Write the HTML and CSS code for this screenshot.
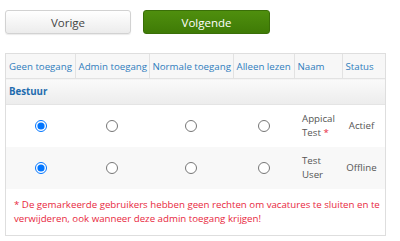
FILE: index.html
```html
<!DOCTYPE html>
<html>
<head>
<meta charset="utf-8">
<link rel="stylesheet" href="styles.css">
</head>
<body>
<div class="page">
  <div class="buttons">
    <button class="btn btn-prev">Vorige</button>
    <button class="btn btn-next">Volgende</button>
  </div>
  <div class="panel">
    <table class="grid">
      <colgroup>
        <col class="c1"><col class="c2"><col class="c3"><col class="c4"><col class="c5"><col class="c6">
      </colgroup>
      <thead>
        <tr>
          <th>Geen toegang</th>
          <th>Admin toegang</th>
          <th>Normale toegang</th>
          <th>Alleen lezen</th>
          <th>Naam</th>
          <th>Status</th>
        </tr>
      </thead>
      <tbody>
        <tr class="group"><td colspan="6">Bestuur</td></tr>
        <tr class="row">
          <td class="radio"><input type="radio" name="u1" checked></td>
          <td class="radio"><input type="radio" name="u1"></td>
          <td class="radio"><input type="radio" name="u1"></td>
          <td class="radio"><input type="radio" name="u1"></td>
          <td class="name">Appical Test <span class="req">*</span></td>
          <td class="status">Actief</td>
        </tr>
        <tr class="row alt">
          <td class="radio"><input type="radio" name="u2" checked></td>
          <td class="radio"><input type="radio" name="u2"></td>
          <td class="radio"><input type="radio" name="u2"></td>
          <td class="radio"><input type="radio" name="u2"></td>
          <td class="name">Test User</td>
          <td class="status">Offline</td>
        </tr>
      </tbody>
    </table>
    <p class="note">* De gemarkeerde gebruikers hebben geen rechten om vacatures te sluiten en te verwijderen, ook wanneer deze admin toegang krijgen!</p>
  </div>
</div>
</body>
</html>
```
FILE: styles.css
```css
html, body {
  margin: 0;
  padding: 0;
  background: #fff;
}
body {
  font-family: "Open Sans", "Liberation Sans", sans-serif;
  font-size: 9.7px;
  color: #555;
}
.page {
  padding: 10px 14px 0 5px;
}
.buttons {
  display: flex;
  gap: 12px;
}
.btn {
  height: 24px;
  width: 126px;
  border-radius: 3px;
  font-family: "Open Sans", "Liberation Sans", sans-serif;
  font-size: 11.5px;
  padding: 0;
  cursor: pointer;
}
.btn-prev {
  background: linear-gradient(#ffffff, #ececec);
  border: 1px solid #d2d2d2;
  color: #444;
  box-shadow: 0 1px 1px rgba(0,0,0,0.08);
}
.btn-next {
  width: 127px;
  background: linear-gradient(#4f8f0e, #3f7b06);
  border: 1px solid #3a6f08;
  color: #fff;
}
.panel {
  margin-top: 19px;
  border: 1px solid #dedede;
  width: 379px;
}
.grid {
  width: 100%;
  border-collapse: collapse;
  table-layout: fixed;
}
.c1 { width: 69px; }
.c2 { width: 74px; }
.c3 { width: 84px; }
.c4 { width: 61px; }
.c5 { width: 48px; }
.c6 { width: 43px; }
.grid th {
  height: 24px;
  padding: 0 3px;
  text-align: left;
  font-weight: normal;
  color: #2f7dbd;
  background: #f7f7f7;
  border-left: 1px solid #e2e2e2;
  border-bottom: 1px solid #e2e2e2;
  white-space: nowrap;
  overflow: hidden;
}
.grid th:first-child { border-left: none; }
.group td {
  height: 25px;
  padding: 0 3px;
  font-weight: bold;
  color: #1f6cae;
  background: linear-gradient(#fafafa, #ececec);
  border-bottom: 1px solid #e4e4e4;
}
.row td {
  height: 42px;
  padding: 0;
  line-height: 14px;
}
.row.alt td { background: #f8f8f8; }
.radio { text-align: center; }
.radio input {
  margin: 0;
  width: 12px;
  height: 12px;
  vertical-align: middle;
}
.name {
  padding: 0 2px 0 8px !important;
  color: #555;
}
.req { color: #e8283e; }
.status {
  text-align: center;
  padding-right: 4px !important;
}
.note {
  margin: 0;
  padding: 9px 4px 9px 8px;
  line-height: 14px;
  color: #e8283e;
}
```
